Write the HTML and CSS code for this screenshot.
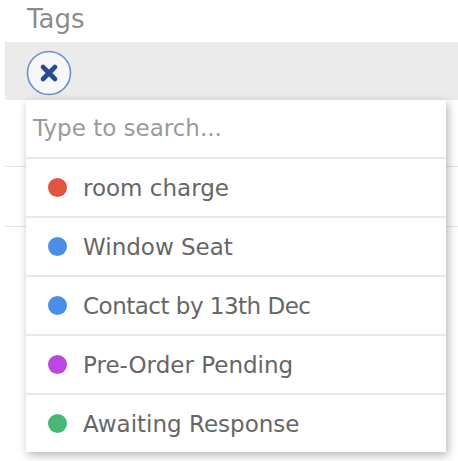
FILE: index.html
```html
<!DOCTYPE html>
<html>
<head>
<meta charset="utf-8">
<link rel="stylesheet" href="styles.css">
</head>
<body>
<div class="page">
  <div class="label">Tags</div>
  <div class="field">
    <button class="clear" aria-label="Clear">
      <svg width="46" height="46" viewBox="0 0 46 46">
        <circle cx="23" cy="23" r="21.5" fill="#f6f7f9" stroke="#6f8dc8" stroke-width="1.6"/>
        <path d="M17 17 L29 29 M29 17 L17 29" stroke="#2a4a90" stroke-width="4.6" stroke-linecap="round"/>
      </svg>
    </button>
  </div>
  <div class="under">
    <div class="under-row first"></div>
    <div class="under-row"></div>
  </div>
  <div class="dropdown">
    <div class="search">Type to search...</div>
    <ul class="options">
      <li class="option"><span class="dot red"></span><span>room charge</span></li>
      <li class="option"><span class="dot blue"></span><span>Window Seat</span></li>
      <li class="option"><span class="dot blue"></span><span class="narrow">Contact by 13th Dec</span></li>
      <li class="option"><span class="dot purple"></span><span>Pre-Order Pending</span></li>
      <li class="option"><span class="dot green"></span><span>Awaiting Response</span></li>
    </ul>
  </div>
</div>
</body>
</html>
```
FILE: styles.css
```css
html, body {
  margin: 0;
  padding: 0;
  background: #ffffff;
}
body {
  font-family: "DejaVu Sans", "Liberation Sans", sans-serif;
  width: 458px;
  height: 461px;
  overflow: hidden;
}
.page {
  position: relative;
  height: 461px;
}
.label {
  padding-left: 27px;
  height: 42px;
  font-size: 26px;
  line-height: 38px;
  color: #8c8c8c;
}
.field {
  margin-left: 5px;
  height: 58px;
  background: #ebebeb;
  display: flex;
  align-items: flex-start;
  padding-left: 21px;
  padding-top: 8px;
  box-sizing: border-box;
}
.clear {
  border: 0;
  padding: 0;
  margin: 0;
  background: none;
  width: 46px;
  height: 46px;
  display: block;
}
.clear svg {
  display: block;
}
.under {
  margin-left: 5px;
}
.under-row {
  height: 59px;
  border-bottom: 1px solid #e6e6e6;
}
.under-row.first {
  height: 66px;
}
.dropdown {
  position: absolute;
  left: 26px;
  top: 100px;
  width: 420px;
  background: #ffffff;
  box-shadow: 2px 3px 9px rgba(0, 0, 0, 0.3);
}
.search {
  height: 57px;
  padding-left: 7px;
  font-size: 23px;
  line-height: 56px;
  color: #9a9a9a;
}
.options {
  list-style: none;
  margin: 0;
  padding: 0;
}
.option {
  height: 57px;
  border-top: 2px solid #e8e8e8;
  display: flex;
  align-items: center;
  gap: 16px;
  padding-left: 22px;
  font-size: 23px;
  color: #666666;
}
.narrow {
  letter-spacing: -0.5px;
}
.dot {
  width: 19px;
  height: 19px;
  border-radius: 50%;
  flex: none;
}
.red { background: #e4533f; }
.blue { background: #4a8fe6; }
.purple { background: #bc48e2; }
.green { background: #49b876; }
```
